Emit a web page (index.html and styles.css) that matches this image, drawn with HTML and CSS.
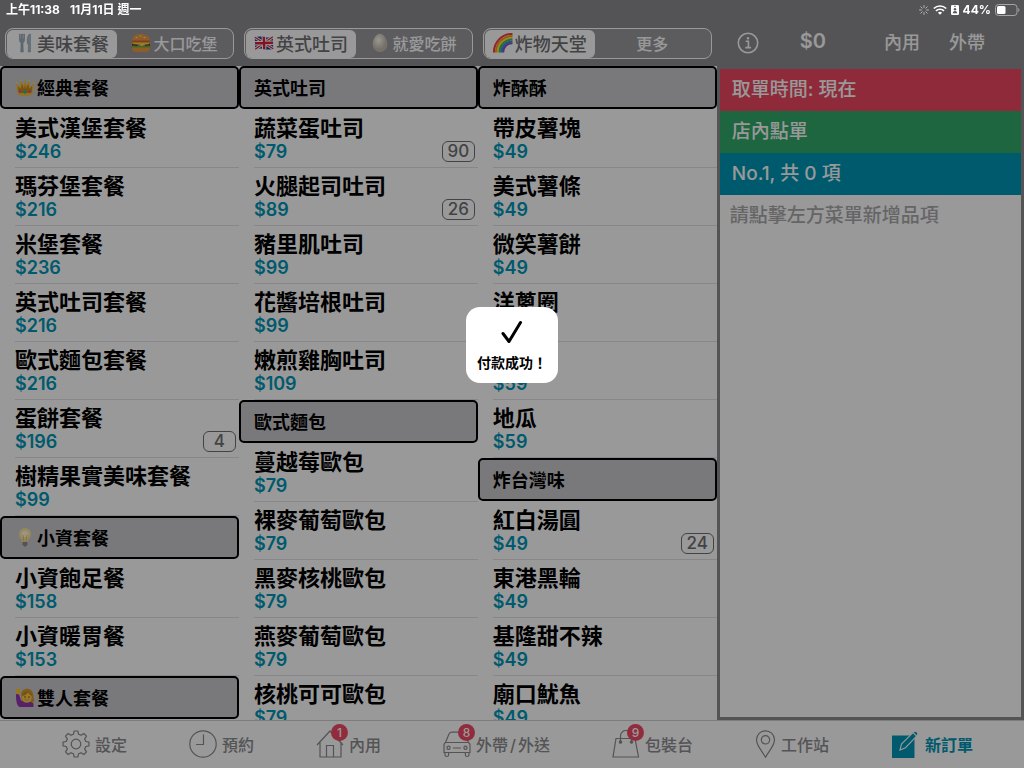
FILE: index.html
```html
<!DOCTYPE html>
<html lang="zh-Hant">
<head>
<meta charset="utf-8">
<meta name="viewport" content="width=device-width, initial-scale=1">
<title>新訂單</title>
<link rel="stylesheet" href="styles.css">
</head>
<body>
<div class="app">
  <div class="statusbar">
    <span class="clock">上午11:38</span>
    <span>11月11日 週一</span>
    <span class="status-icons">
      <svg width="10" height="10" viewBox="0 0 10 10" stroke="#b4b4b4" stroke-width="1" stroke-linecap="round"><path d="M5 .5v2M5 7.500v2M.5 5h2M7.500 5h2M1.800 1.800l1.400 1.400M6.800 6.800l1.400 1.400M8.200 1.800L6.800 3.200M3.200 6.800L1.800 8.200"/></svg>
      <svg width="14" height="10" viewBox="0 0 14 10" fill="none" stroke="#fff" stroke-width="1.700"><path d="M.8 3.500a9 9 0 0 1 12.400 0M3 5.900a5.700 5.700 0 0 1 8 0"/><path d="M7 9.800L4.900 7.700a3 3 0 0 1 4.200 0z" fill="#fff" stroke="none"/></svg>
      <svg width="8" height="10" viewBox="0 0 8 10"><rect width="8" height="10" rx="1.300" fill="#fff"/><path d="M3 1.300h2" stroke="#555" stroke-width=".8"/><circle cx="4" cy="4.200" r="1.200" fill="#555"/><path d="M1.800 8.300c0-3 4.400-3 4.400 0z" fill="#555"/></svg>
      <span class="battery-level">44%</span>
      <svg width="25" height="12" viewBox="0 0 25 12"><rect x=".5" y=".5" width="21.500" height="11" rx="3" fill="none" stroke="#a5a5a6"/><rect x="2" y="2" width="8.500" height="8" rx="1.500" fill="#fff"/><path d="M23.300 4v4c1.400-.4 1.400-3.600 0-4z" fill="#a5a5a6"/></svg>
    </span>
  </div>

  <header class="topbar">
    <nav class="segments">
      <div class="segment">
        <button class="seg active"><svg class="emoji" viewBox="0 0 20 20"><path d="M4.500 1v6c0 2 1 2.500 1.500 3L5.700 19h2.600L8 10c.5-.5 1.500-1 1.500-3V1h-.8v5H7.500V1h-1v5H5.300V1z" fill="#9fb2c1" stroke="#71818e" stroke-width=".4"/><path d="M14.500 1c-2.500 2-2.500 6-2 10h1l-.3 8h2.300V1z" fill="#a9bfd0" stroke="#71818e" stroke-width=".4"/></svg>美味套餐</button>
        <button class="seg"><svg class="emoji" viewBox="0 0 20 20"><path d="M1 8C1 3 5 1 10 1s9 2 9 7z" fill="#e99a45"/><path d="M1 7.500h18v2.300H1z" fill="#d7662f"/><path d="M1 9.500h18l-2 2.500-3-1-3 3-3-3H1z" fill="#ffd23c"/><path d="M1 10.500l3 1 2 .2 2 1.800h5l2-1.800 4-1v2.500H1z" fill="#7a3520"/><path d="M.7 13l2-.8 2.300 1 2.500-.7 2.500 1 2.500-1 2.500.7 2-1 2.300.8v1.800H.7z" fill="#63b32e"/><path d="M1 14.500h18c0 3-1.500 4.500-4 4.500H5c-2.500 0-4-1.500-4-4.500z" fill="#e99a45"/><path d="M5 4.500h1M9 3h1M13 4.500h1" stroke="#ffe6a5" stroke-linecap="round"/></svg>大口吃堡</button>
      </div>
      <div class="segment">
        <button class="seg active"><svg class="emoji" viewBox="0 0 20 20"><g transform="rotate(-2 10 10)"><path d="M1 4q4.500-1.500 9 0t9 0v12q-4.500 1.500-9 0t-9 0z" fill="#23408f"/><path d="M1 4l18 12M19 4L1 16" stroke="#fff" stroke-width="3"/><path d="M1 4l18 12M19 4L1 16" stroke="#d8203c" stroke-width="1.200"/><path d="M10 3.800v12.500M1 10h18" stroke="#fff" stroke-width="4.400"/><path d="M10 3.800v12.500M1 10h18" stroke="#d8203c" stroke-width="2.400"/></g></svg>英式吐司</button>
        <button class="seg"><svg class="emoji" viewBox="0 0 20 20"><defs><radialGradient id="egg" cx=".4" cy=".35"><stop offset="0" stop-color="#fffdf2"/><stop offset="1" stop-color="#c4bdb0"/></radialGradient></defs><path d="M10 .8c4 0 7.300 5.500 7.300 10.500 0 4.700-3.300 7.700-7.300 7.700s-7.300-3-7.300-7.700C2.700 6.300 6 .8 10 .8z" fill="url(#egg)"/></svg>就愛吃餅</button>
      </div>
      <div class="segment">
        <button class="seg active"><svg class="emoji" viewBox="0 0 20 20" fill="none" stroke-width="2"><path d="M1 19.500A18 18 0 0 1 19.500 1" stroke="#f04141"/><path d="M3 19.500A16.300 16.300 0 0 1 19.500 3" stroke="#ff922b"/><path d="M4.800 19.500A14.500 14.500 0 0 1 19.500 4.800" stroke="#ffe033"/><path d="M6.600 19.500A12.700 12.700 0 0 1 19.500 6.600" stroke="#42bd4c"/><path d="M8.400 19.500A11 11 0 0 1 19.500 8.400" stroke="#338be8"/><path d="M10.200 19.500a9 9 0 0 1 9.300-9.300" stroke="#8751ce"/></svg>炸物天堂</button>
        <button class="seg">更多</button>
      </div>
    </nav>
    <div class="actions">
      <button class="action" aria-label="資訊"><svg width="22" height="22" viewBox="0 0 22 22" fill="none" stroke="#fff" stroke-width="1.600"><circle cx="11" cy="11" r="9.700"/><path d="M8.700 9.200h2.700v6.300M8.300 15.600h5.700"/><circle cx="11" cy="6.200" r="1.200" fill="#fff" stroke="none"/></svg></button>
      <span class="total">$0</span>
      <button class="action">內用</button>
      <button class="action">外帶</button>
    </div>
  </header>

  <main class="content">
    <div class="menu">
      <section class="column">
        <h2 class="group"><svg class="emoji" viewBox="0 0 20 20"><path d="M2.500 17L.8 6l4 4L6 3.500l3 5L10 2l1.500 6.500 2.500-5L15.200 10l4-4-1.700 11c-3 2.300-12 2.300-15 0z" fill="#f5bd38"/><path d="M3.500 16L3 9l2.500 3L7 7l2 5 1-5 1 5 2-5 1.500 5L17 9l-.5 7z" fill="#c98a1e"/><path d="M3 15c4 1.800 10 1.800 14 0v2.300c-4 2-10 2-14 0z" fill="#f5bd38"/><circle cx="10" cy="15" r="1.700" fill="#27b89a"/><circle cx="5" cy="14.500" r="1.200" fill="#dd47a8"/><circle cx="15" cy="14.500" r="1.200" fill="#dd47a8"/><g fill="#ffd967"><circle cx="1.200" cy="5.700" r="1"/><circle cx="6" cy="3.300" r="1"/><circle cx="14" cy="3.300" r="1"/><circle cx="18.800" cy="5.700" r="1"/></g></svg>經典套餐</h2>
        <button class="item"><span class="name">美式漢堡套餐</span><span class="price">$246</span></button>
        <button class="item"><span class="name">瑪芬堡套餐</span><span class="price">$216</span></button>
        <button class="item"><span class="name">米堡套餐</span><span class="price">$236</span></button>
        <button class="item"><span class="name">英式吐司套餐</span><span class="price">$216</span></button>
        <button class="item"><span class="name">歐式麵包套餐</span><span class="price">$216</span></button>
        <button class="item"><span class="name">蛋餅套餐</span><span class="price">$196</span><span class="stock">4</span></button>
        <button class="item"><span class="name">樹精果實美味套餐</span><span class="price">$99</span></button>
        <h2 class="group"><svg class="emoji" viewBox="0 0 20 20"><path d="M10 1a6 6 0 0 1 6 6.200c0 3.300-2.700 4.300-3.300 7.800H7.300C6.700 11.500 4 10.500 4 7.200A6 6 0 0 1 10 1z" fill="#f8e49a"/><circle cx="10" cy="7" r="3.600" fill="#fff8d6"/><path d="M8 8l1 7M12 8l-1 7" stroke="#d9ad52" stroke-width=".7"/><path d="M7.500 15h5v2.500L11 19.500H9l-1.500-2z" fill="#8c8c8c"/></svg>小資套餐</h2>
        <button class="item"><span class="name">小資飽足餐</span><span class="price">$158</span></button>
        <button class="item"><span class="name">小資暖胃餐</span><span class="price">$153</span></button>
        <h2 class="group"><svg class="emoji" viewBox="0 0 20 20"><path d="M6 7c1-6 9-7 11.500-2 1.500 3 .5 6 2 9l-3 2.500L7 15z" fill="#d79b2d"/><path d="M1 7h3l2 6.500c3 2 9 0 12.500 3V20H5C1.500 19 1 13 1 7z" fill="#9136ac"/><path d="M1.300 7L.9 2.500l.8-.8 3-.9 1 4L4 7.500z" fill="#fcc83a"/><ellipse cx="11.800" cy="10.500" rx="4.900" ry="5.200" fill="#fdcb42"/><path d="M7 9c3-.5 5-2 6-4 1 2 2.500 3.300 4 4-.5-6-9-6-10 0z" fill="#c28423"/><circle cx="10" cy="10" r=".7" fill="#553818"/><circle cx="14" cy="10" r=".7" fill="#553818"/><path d="M9.800 12.300h4c-.5 2-3.500 2-4 0z" fill="#fff" stroke="#8b4d20" stroke-width=".4"/></svg>雙人套餐</h2>
      </section>

      <section class="column">
        <h2 class="group">英式吐司</h2>
        <button class="item"><span class="name">蔬菜蛋吐司</span><span class="price">$79</span><span class="stock">90</span></button>
        <button class="item"><span class="name">火腿起司吐司</span><span class="price">$89</span><span class="stock">26</span></button>
        <button class="item"><span class="name">豬里肌吐司</span><span class="price">$99</span></button>
        <button class="item"><span class="name">花醬培根吐司</span><span class="price">$99</span></button>
        <button class="item"><span class="name">嫩煎雞胸吐司</span><span class="price">$109</span></button>
        <h2 class="group">歐式麵包</h2>
        <button class="item"><span class="name">蔓越莓歐包</span><span class="price">$79</span></button>
        <button class="item"><span class="name">裸麥葡萄歐包</span><span class="price">$79</span></button>
        <button class="item"><span class="name">黑麥核桃歐包</span><span class="price">$79</span></button>
        <button class="item"><span class="name">燕麥葡萄歐包</span><span class="price">$79</span></button>
        <button class="item"><span class="name">核桃可可歐包</span><span class="price">$79</span></button>
      </section>

      <section class="column">
        <h2 class="group">炸酥酥</h2>
        <button class="item"><span class="name">帶皮薯塊</span><span class="price">$49</span></button>
        <button class="item"><span class="name">美式薯條</span><span class="price">$49</span></button>
        <button class="item"><span class="name">微笑薯餅</span><span class="price">$49</span></button>
        <button class="item"><span class="name">洋蔥圈</span><span class="price">$59</span></button>
        <button class="item"><span class="name">雞塊</span><span class="price">$59</span></button>
        <button class="item"><span class="name">地瓜</span><span class="price">$59</span></button>
        <h2 class="group">炸台灣味</h2>
        <button class="item"><span class="name">紅白湯圓</span><span class="price">$49</span><span class="stock">24</span></button>
        <button class="item"><span class="name">東港黑輪</span><span class="price">$49</span></button>
        <button class="item"><span class="name">基隆甜不辣</span><span class="price">$49</span></button>
        <button class="item"><span class="name">廟口魷魚</span><span class="price">$49</span></button>
      </section>
    </div>

    <aside class="order">
      <div class="line pickup">取單時間: 現在</div>
      <div class="line dinein">店內點單</div>
      <div class="line count">No.1, 共 0 項</div>
      <p class="hint">請點擊左方菜單新增品項</p>
    </aside>
  </main>

  <nav class="tabs">
    <button class="tab"><span class="tab-icon"><svg width="28" height="28" viewBox="0 0 28 28" fill="none" stroke="currentColor" stroke-width="1.200" stroke-linejoin="round"><path d="M12.200 1h3.600l.7 3.200 2.600 1.100L21.900 3.500l2.600 2.600-1.800 2.800 1.100 2.600 3.200.7v3.600l-3.200.7-1.100 2.600 1.800 2.800-2.600 2.600-2.800-1.800-2.600 1.100-.7 3.200h-3.600l-.7-3.200-2.600-1.100-2.800 1.800-2.600-2.600 1.800-2.800-1.100-2.600L1 15.800v-3.600l3.200-.7 1.100-2.600L3.500 6.100l2.600-2.600 2.800 1.800 2.600-1.100z"/><circle cx="14" cy="14" r="4.800"/></svg></span>設定</button>
    <button class="tab"><span class="tab-icon"><svg width="28" height="28" viewBox="0 0 28 28" fill="none" stroke="currentColor" stroke-width="1.200"><circle cx="14" cy="14" r="13.200"/><path d="M14.500 4.500v10H7"/></svg></span>預約</button>
    <button class="tab"><span class="tab-icon"><svg width="28" height="28" viewBox="0 0 28 28" fill="none" stroke="currentColor" stroke-width="1.200"><path d="M1 15L14 1l13 14M4 12v15h21V12M10.500 27V15.500h7V27M21 8V3h3v8"/></svg><span class="badge">1</span></span>內用</button>
    <button class="tab"><span class="tab-icon"><svg width="28" height="28" viewBox="0 0 28 28" fill="none" stroke="currentColor" stroke-width="1.200"><path d="M2.500 12.500L6 4q1-1.800 3-1.800h10q2 0 3 1.800l3.500 8.500M3.500 12.500h21q2.500 0 2.500 2.500v7.500H1V15q0-2.500 2.500-2.500zM2 22.500V25q0 1.500 1.800 1.500T5.600 25v-2.500M22.400 22.500V25q0 1.500 1.800 1.500T26 25v-2.500M10 18h8"/><circle cx="5.500" cy="17.700" r="1.600"/><circle cx="22.500" cy="17.700" r="1.600"/></svg><span class="badge">8</span></span><span>外帶<span class="slash">/</span>外送</span></button>
    <button class="tab"><span class="tab-icon"><svg width="28" height="28" viewBox="0 0 28 28" fill="none" stroke="currentColor" stroke-width="1.200"><path d="M4 8.500h19L26.500 27H1zM8.500 11.500V6a5.500 5.500 0 0 1 11 0v5.500"/><circle cx="8.500" cy="12" r="1.200" fill="currentColor"/><circle cx="19.500" cy="12" r="1.200" fill="currentColor"/></svg><span class="badge">9</span></span>包裝台</button>
    <button class="tab"><span class="tab-icon"><svg width="21" height="28" viewBox="0 0 21 28" fill="none" stroke="currentColor" stroke-width="1.200"><path d="M10.500 27.300C7 20.500 1.500 16 1.500 9.800a9 9 0 0 1 18 0c0 6.200-5.500 10.700-9 17.500z"/><circle cx="10.500" cy="9.800" r="4.200"/></svg></span>工作站</button>
    <button class="tab current"><span class="tab-icon"><svg width="29" height="28" viewBox="0 0 29 28"><path d="M1 5.500h22.500V28H1z" fill="currentColor"/><path d="M9 20l1.500-6L22.700 1.800q1.500-1.300 3.200.2 1.900 1.700.4 3.300L14.500 17.700z" fill="currentColor" stroke="#fff" stroke-width="1.100"/><path d="M22 2.500l4 4" stroke="#fff" stroke-width="1.100"/></svg></span>新訂單</button>
  </nav>
</div>

<div class="overlay">
  <div class="toast" role="status">
    <svg width="24" height="26" viewBox="0 0 24 26" fill="none" stroke="#000" stroke-width="3" stroke-linecap="round" stroke-linejoin="round"><path d="M3 14.500l6 8L20.500 3.500"/></svg>
    <span>付款成功！</span>
  </div>
</div>
</body>
</html>
```
FILE: styles.css
```css
* { box-sizing: border-box; }

body {
  margin: 0;
  font-family: Inter, "Noto Sans CJK TC", sans-serif;
  font-weight: 500;
  color: #000;
  background: #fff;
}

button {
  margin: 0;
  padding: 0;
  border: 0;
  background: none;
  color: inherit;
  font: inherit;
  cursor: pointer;
}

svg { display: block; flex: none; }

.app {
  display: flex;
  flex-direction: column;
  height: 100vh;
}

/* Status bar, drawn above the dimming layer */
.statusbar {
  position: relative;
  z-index: 2;
  display: flex;
  align-items: center;
  gap: 10px;
  height: 20px;
  padding: 0 4px 0 6px;
  font-size: 12px;
  font-weight: 700;
  line-height: 20px;
  color: #fff;
}

.status-icons {
  display: flex;
  align-items: center;
  gap: 4px;
  margin-left: auto;
}

/* Top bar */
.topbar {
  display: grid;
  grid-template-columns: 7fr 3fr;
  align-items: center;
  height: 66px;
  margin-top: -20px;
  padding-top: 20px;
  background: #8c8c8f;
  color: #fff;
}

.segments {
  display: grid;
  grid-template-columns: repeat(3, 1fr);
  gap: 10px;
  padding: 0 5px;
}

.segment {
  display: grid;
  grid-template-columns: 110px 1fr;
  height: 31px;
  border: 1px solid #fff;
  border-radius: 8px;
  padding: 1px;
  background: #99999f;
}

.seg {
  display: flex;
  align-items: center;
  justify-content: center;
  gap: 2px;
  padding-bottom: 2px;
  font-size: 16px;
  border-radius: 6px;
}

.seg.active {
  font-size: 18px;
  background: #fff;
  color: #707073;
}

.emoji { width: 20px; height: 20px; }

.actions {
  display: flex;
  align-items: center;
  padding: 0 39px 4px 20px;
  font-size: 18px;
  gap: 29px;
}

.action svg { margin-top: 4px; }

.total {
  margin: 0 auto 0 12px;
  font-size: 20px;
  font-weight: 600;
}

/* Menu and order panel */
.content {
  flex: 1;
  min-height: 0;
  display: grid;
  grid-template-columns: 7fr 3fr;
}

.menu {
  display: grid;
  grid-template-columns: repeat(3, 1fr);
  min-height: 0;
  overflow: hidden;
}

.column { min-width: 0; }

.group {
  display: flex;
  align-items: center;
  gap: 2px;
  height: 43px;
  margin: 0 0 1px;
  padding: 0 13px 2px;
  border: 2px solid #000;
  border-radius: 5px;
  background: #cacace;
  font-size: 18px;
  font-weight: 700;
}

.item {
  position: relative;
  display: flex;
  flex-direction: column;
  align-items: stretch;
  width: 100%;
  height: 58px;
  padding: 5px 0 0 15px;
  text-align: left;
}

.item::after {
  content: "";
  height: 1px;
  margin-top: auto;
  background: #e2e2e5;
}

.name {
  font-size: 22px;
  font-weight: 700;
  line-height: 26px;
}

.price {
  font-size: 18px;
  font-weight: 600;
  line-height: 22px;
  color: #0096b7;
}

.stock {
  position: absolute;
  right: 3px;
  bottom: 6px;
  width: 33px;
  border: 1px solid #707073;
  border-radius: 6px;
  font-size: 17px;
  line-height: 19px;
  text-align: center;
  color: #707073;
}

.order {
  border: 3px solid #8c8c8f;
  font-size: 19px;
}

.line {
  height: 42px;
  padding: 0 12px;
  line-height: 42px;
  color: #fff;
}

.pickup { background: #ee4661; }
.dinein { background: #32aa6b; }
.count { background: #0096b7; }

.hint {
  margin: 0;
  padding: 0 10px;
  line-height: 42px;
  color: #a9a9ab;
}

/* Bottom tabs */
.tabs {
  display: flex;
  align-items: center;
  justify-content: space-between;
  height: 48px;
  padding: 0 51px 2px 62px;
  border-top: 1px solid #cfcfd2;
  font-size: 16px;
  color: #8c8c8f;
}

.tab {
  display: flex;
  align-items: center;
  gap: 5px;
}

.tab.current {
  font-weight: 700;
  color: #0096b7;
}

.slash { margin: 0 2px; }

.tab-icon { position: relative; }

.badge {
  position: absolute;
  top: -6px;
  right: -4px;
  width: 17px;
  height: 17px;
  border-radius: 50%;
  background: #f24a66;
  font-size: 12px;
  line-height: 17px;
  text-align: center;
  color: #fff;
}

/* Dimming layer with toast */
.overlay {
  position: fixed;
  inset: 0;
  z-index: 1;
  display: flex;
  align-items: center;
  justify-content: center;
  padding-bottom: 78px;
  background: rgba(0, 0, 0, 0.4);
}

.toast {
  display: flex;
  flex-direction: column;
  align-items: center;
  gap: 8px;
  padding: 12px 11px 10px;
  border-radius: 14px;
  background: #fff;
  font-size: 14px;
  font-weight: 700;
  line-height: 20px;
}
```
